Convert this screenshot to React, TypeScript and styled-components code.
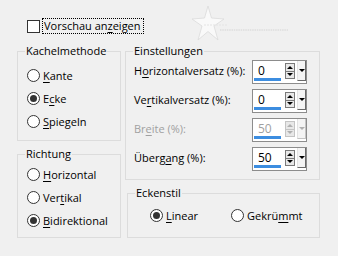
import styled, { createGlobalStyle } from 'styled-components'

const GlobalStyle = createGlobalStyle`
  html, body {
    margin: 0;
    padding: 0;
    background: #f0f0f0;
  }
  body {
    font-family: 'Open Sans', 'Noto Sans', sans-serif;
    font-size: 11px;
    color: #000;
  }
`

const Page = styled.div`
  position: relative;
  width: 338px;
  height: 256px;
  background: #f0f0f0;
  padding-top: 18px;
  box-sizing: border-box;
  overflow: hidden;
`

const Header = styled.div`
  display: flex;
  align-items: center;
  padding-left: 27px;
  height: 16px;
`

const CheckBox = styled.span`
  width: 11px;
  height: 11px;
  border: 1px solid #333;
  background: #fff;
  margin-right: 2px;
`

const FocusLabel = styled.span`
  border: 1px dotted #000;
  padding: 0 2px 0 1px;
  line-height: 14px;
  white-space: nowrap;
`

const Watermark = styled.svg`
  position: absolute;
  left: 190px;
  top: 4px;
`

const Columns = styled.div`
  display: grid;
  grid-template-columns: 104px 195px;
  column-gap: 4px;
  margin: 17px 0 0 17px;
`

const Column = styled.div`
  display: flex;
  flex-direction: column;
  gap: 13px;
`

const Group = styled.div<{ $h: number; $pt: number; $shift?: number }>`
  position: relative;
  box-sizing: border-box;
  height: ${({ $h }) => $h}px;
  border: 1px solid #dcdcdc;
  padding-top: ${({ $pt }) => $pt}px;
  margin-left: ${({ $shift }) => $shift || 0}px;
`

const GroupTitle = styled.span`
  position: absolute;
  top: -9px;
  left: 7px;
  padding: 0 1px;
  background: #f0f0f0;
  line-height: 16px;
  white-space: nowrap;
`

const RadioList = styled.div`
  display: flex;
  flex-direction: column;
  padding-left: 9px;
`

const RadioRow = styled.label<{ $h?: number; $w?: number }>`
  display: flex;
  align-items: center;
  height: ${({ $h }) => $h || 23}px;
  width: ${({ $w }) => ($w ? `${$w}px` : 'auto')};
  white-space: nowrap;
`

const RadioCircle = styled.span<{ $on?: boolean }>`
  position: relative;
  width: 11px;
  height: 11px;
  border: 1px solid #333;
  border-radius: 50%;
  background: #fff;
  margin-right: 3px;
  flex: none;

  &::after {
    content: '';
    display: ${({ $on }) => ($on ? 'block' : 'none')};
    position: absolute;
    left: 2px;
    top: 2px;
    width: 7px;
    height: 7px;
    border-radius: 50%;
    background: #333;
  }
`

const Key = styled.span`
  text-decoration: underline;
  text-underline-offset: 2px;
`

const FieldList = styled.div`
  display: flex;
  flex-direction: column;
  gap: 5px;
  padding: 0 12px 0 8px;
`

const FieldRow = styled.div`
  display: flex;
  align-items: center;
  justify-content: space-between;
  height: 24px;
`

const FieldLabel = styled.span<{ $off?: boolean }>`
  color: ${({ $off }) => ($off ? '#a0a0a0' : '#000')};
  padding-bottom: 4px;
  white-space: nowrap;
`

const Spin = styled.div`
  display: flex;
  flex: none;
  align-items: flex-start;
  box-sizing: border-box;
  width: 55px;
  height: 24px;
  border: 1px solid #8c8c8c;
  background: #fff;
`

const Value = styled.div<{ $off?: boolean }>`
  display: flex;
  flex-direction: column;
  width: 27px;
  margin-left: 1px;
  padding-top: 2px;
  font-size: 12px;
  color: ${({ $off }) => ($off ? '#a0a0a0' : '#000')};
`

const ValueText = styled.span`
  padding-left: 4px;
  line-height: 15px;
`

const Bar = styled.span`
  height: 3px;
  background: #3c8de0;
`

const Steps = styled.div<{ $off?: boolean }>`
  display: flex;
  flex-direction: column;
  box-sizing: border-box;
  width: 10px;
  height: 16px;
  margin: 2px 0 0 4px;
  border: 1px solid ${({ $off }) => ($off ? '#c4c4c4' : '#7a7a7a')};
  background: #e8e8e8;
`

const Step = styled.span<{ $down?: boolean; $off?: boolean }>`
  flex: 1;
  display: flex;
  align-items: center;
  justify-content: center;
  border-top: ${({ $down, $off }) => ($down ? `1px solid ${$off ? '#c4c4c4' : '#7a7a7a'}` : 'none')};

  &::before {
    content: '';
    border-left: 3px solid transparent;
    border-right: 3px solid transparent;
    ${({ $down, $off }) =>
      $down
        ? `border-top: 3px solid ${$off ? '#b0b0b0' : '#000'};`
        : `border-bottom: 3px solid ${$off ? '#b0b0b0' : '#000'};`}
  }
`

const DropButton = styled.div<{ $off?: boolean }>`
  display: flex;
  align-items: center;
  justify-content: center;
  box-sizing: border-box;
  width: 9px;
  height: 20px;
  margin-left: 2px;
  background: #f4f4f4;
  border-right: 1px solid ${({ $off }) => ($off ? '#c4c4c4' : '#696969')};
  border-bottom: 1px solid ${({ $off }) => ($off ? '#c4c4c4' : '#696969')};
  border-left: 1px solid #e3e3e3;

  &::before {
    content: '';
    border-left: 3px solid transparent;
    border-right: 3px solid transparent;
    border-top: 3px solid ${({ $off }) => ($off ? '#b0b0b0' : '#000')};
  }
`

const StyleRow = styled.div`
  display: flex;
  align-items: center;
  height: 100%;
  padding-left: 22px;
`

type Radio = { pre: string; key: string; post: string; on?: boolean }

const kachel: Radio[] = [
  { pre: '', key: 'K', post: 'ante' },
  { pre: 'E', key: 'c', post: 'ke', on: true },
  { pre: '', key: 'S', post: 'piegeln' },
]

const richtung: Radio[] = [
  { pre: '', key: 'H', post: 'orizontal' },
  { pre: 'Ver', key: 't', post: 'ikal' },
  { pre: '', key: 'B', post: 'idirektional', on: true },
]

const fields = [
  { pre: 'H', key: 'o', post: 'rizontalversatz (%):', value: '0' },
  { pre: 'Ve', key: 'r', post: 'tikalversatz (%):', value: '0' },
  { pre: 'Br', key: 'e', post: 'ite (%):', value: '50', off: true },
  { pre: 'Überg', key: 'a', post: 'ng (%):', value: '50' },
]

function SpinBox({ value, off }: { value: string; off?: boolean }) {
  return (
    <Spin>
      <Value $off={off}>
        <ValueText>{value}</ValueText>
        <Bar />
      </Value>
      <Steps $off={off}>
        <Step $off={off} />
        <Step $down $off={off} />
      </Steps>
      <DropButton $off={off} />
    </Spin>
  )
}

export default function App() {
  return (
    <Page>
      <GlobalStyle />
      <Watermark width="110" height="40" viewBox="0 0 110 40">
        <polygon
          points="18,2 21.5,14 34,15 24,22 28,36 18,27.5 8,36 12,22 2,15 14.5,14"
          fill="#f9f9f9"
          stroke="#dadada"
          strokeWidth="0.8"
        />
        <line x1="14" y1="21" x2="38" y2="21" stroke="#e4e4e4" strokeWidth="1.2" strokeDasharray="2 1" />
        <line x1="30" y1="26" x2="98" y2="26" stroke="#d4d4d4" strokeWidth="1" strokeDasharray="1.5 0.8" />
      </Watermark>

      <Header>
        <CheckBox />
        <FocusLabel>
          Vorschau an<Key>z</Key>eigen
        </FocusLabel>
      </Header>

      <Columns>
        <Column>
          <Group $h={90} $pt={12}>
            <GroupTitle>Kachelmethode</GroupTitle>
            <RadioList>
              {kachel.map(r => (
                <RadioRow key={r.post}>
                  <RadioCircle $on={r.on} />
                  {r.pre}
                  <Key>{r.key}</Key>
                  {r.post}
                </RadioRow>
              ))}
            </RadioList>
          </Group>
          <Group $h={84} $pt={8}>
            <GroupTitle>Richtung</GroupTitle>
            <RadioList>
              {richtung.map(r => (
                <RadioRow key={r.post}>
                  <RadioCircle $on={r.on} />
                  {r.pre}
                  <Key>{r.key}</Key>
                  {r.post}
                </RadioRow>
              ))}
            </RadioList>
          </Group>
        </Column>

        <Column>
          <Group $h={129} $pt={8}>
            <GroupTitle>Einstellungen</GroupTitle>
            <FieldList>
              {fields.map(f => (
                <FieldRow key={f.post}>
                  <FieldLabel $off={f.off}>
                    {f.pre}
                    <Key>{f.key}</Key>
                    {f.post}
                  </FieldLabel>
                  <SpinBox value={f.value} off={f.off} />
                </FieldRow>
              ))}
            </FieldList>
          </Group>
          <Group $h={45} $pt={0} $shift={2}>
            <GroupTitle>Eckenstil</GroupTitle>
            <StyleRow>
              <RadioRow $w={81}>
                <RadioCircle $on />
                <Key>L</Key>inear
              </RadioRow>
              <RadioRow>
                <RadioCircle />
                Gekrü<Key>m</Key>mt
              </RadioRow>
            </StyleRow>
          </Group>
        </Column>
      </Columns>
    </Page>
  )
}
